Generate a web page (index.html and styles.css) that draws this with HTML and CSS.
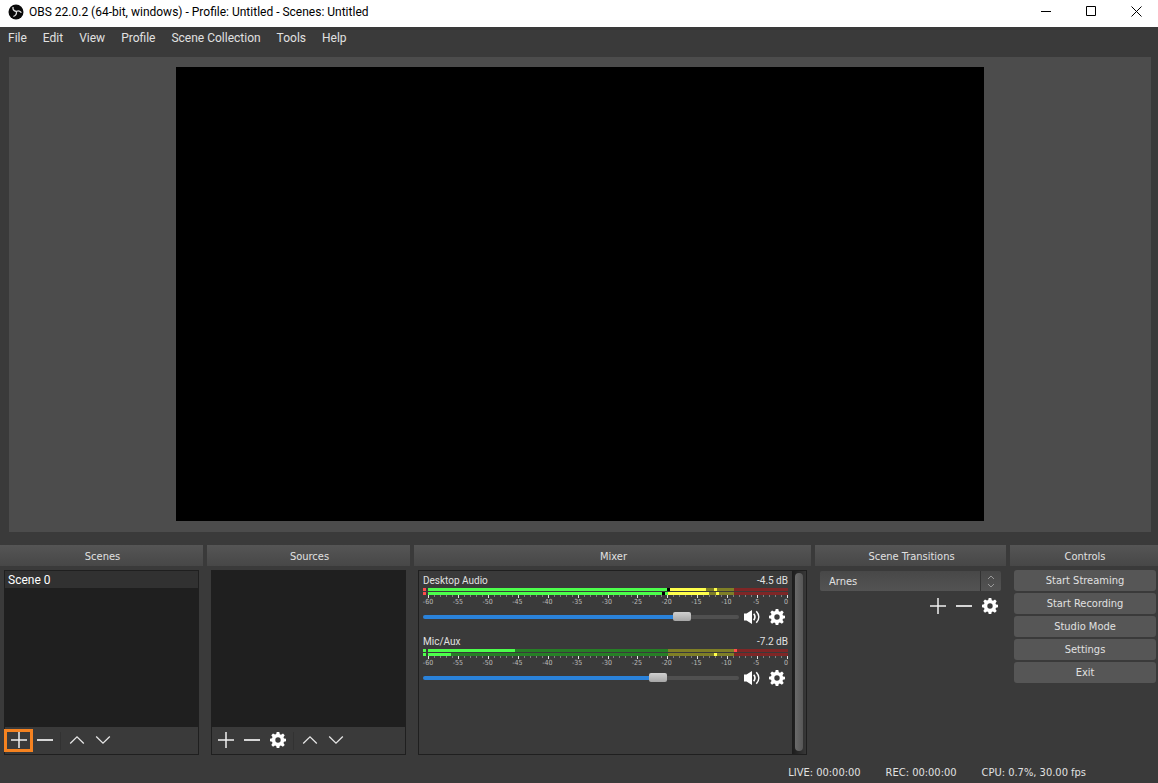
FILE: index.html
```html
<!DOCTYPE html>
<html lang="en">
<head>
<meta charset="utf-8">
<title>OBS 22.0.2</title>
<link rel="stylesheet" href="styles.css">
</head>
<body>
<svg class="defs" width="0" height="0" aria-hidden="true">
  <symbol id="plus" viewBox="0 0 16 16"><path d="M0 8h16M8 0v16" stroke="#f0f0f0" stroke-width="1.500" fill="none"/></symbol>
  <symbol id="minus" viewBox="0 0 16 16"><path d="M0 8h16" stroke="#d6d6d6" stroke-width="2" fill="none"/></symbol>
  <symbol id="up" viewBox="0 0 16 16"><path d="M1.200 11.500L8 4.800l6.800 6.700" stroke="#e6e6e6" stroke-width="1.300" fill="none"/></symbol>
  <symbol id="down" viewBox="0 0 16 16"><path d="M1.200 4.500L8 11.200l6.800-6.700" stroke="#e6e6e6" stroke-width="1.300" fill="none"/></symbol>
  <symbol id="gear" viewBox="0 0 16 16"><path fill="#fff" fill-rule="evenodd" d="M6.700 0h2.600l.5 2.200 1.200.5 2-1.200 1.700 1.700-1.200 2 .5 1.200 2 .4v2.500l-2 .5-.5 1.200 1.200 2-1.800 1.800-2-1.200-1.200.5L9.300 16H6.700l-.5-2-1.200-.5-2 1.200L1.300 13l1.200-2L2 9.800l-2-.5V6.800l2-.5.5-1.200-1.200-1.900L3 1.400l2 1.200 1.200-.5zM8 5.300a2.700 2.700 0 1 0 0 5.400 2.700 2.700 0 0 0 0-5.400z"/></symbol>
  <symbol id="speaker" viewBox="0 0 16 16"><path fill="#fff" d="M0 4.500h2.500L8 1v14l-5.500-3.500H0z"/><path d="M9.700 4.800c1.500 1.900 1.500 4.500 0 6.400M12.300 2.300c3.200 3.400 3.200 8 0 11.400" stroke="#fff" stroke-width="1.600" fill="none"/></symbol>
</svg>

<header class="titlebar">
  <svg class="logo" viewBox="0 0 16 16" aria-hidden="true">
    <circle cx="8" cy="8" r="7.500" fill="#0a0a0a"/>
    <path d="M5 3c-.3 2.300.8 4 3.300 4.500M13.300 8.800c-.9-1.900-3-2.400-5-1.300M8.300 7.500c.6 2.200-.4 4-2.900 5" stroke="#ddd" stroke-width="1.300" fill="none"/>
  </svg>
  <h1 class="window-title">OBS 22.0.2 (64-bit, windows) - Profile: Untitled - Scenes: Untitled</h1>
  <div class="window-buttons">
    <button class="window-button" aria-label="Minimize"><svg viewBox="0 0 11 11"><path d="M0 5.500h10" stroke="#000" fill="none"/></svg></button>
    <button class="window-button" aria-label="Maximize"><svg viewBox="0 0 11 11"><path d="M.5.500h9v9H.5z" stroke="#000" fill="none"/></svg></button>
    <button class="window-button" aria-label="Close"><svg viewBox="0 0 11 11"><path d="M.5.500l10 10M10.500.500l-10 10" stroke="#000" fill="none"/></svg></button>
  </div>
</header>

<nav class="menubar">
  <button class="menu">File</button><button class="menu">Edit</button><button class="menu">View</button><button class="menu">Profile</button><button class="menu">Scene Collection</button><button class="menu">Tools</button><button class="menu">Help</button>
</nav>

<main class="preview">
  <svg class="output" viewBox="0 0 808 454" role="img" aria-label="Preview"><path d="M0 0h808v454H0z"/></svg>
</main>

<div class="docks">
  <section class="dock">
    <h2 class="dock-title">Scenes</h2>
    <div class="panel">
      <ul class="list"><li class="list-item">Scene 0</li></ul>
      <div class="toolbar">
        <button class="tool tool-marked" aria-label="Add scene"><svg><use href="#plus"/></svg></button>
        <button class="tool" aria-label="Remove scene"><svg><use href="#minus"/></svg></button>
        <span class="separator"></span>
        <button class="tool" aria-label="Move scene up"><svg><use href="#up"/></svg></button>
        <button class="tool" aria-label="Move scene down"><svg><use href="#down"/></svg></button>
      </div>
    </div>
  </section>

  <section class="dock">
    <h2 class="dock-title">Sources</h2>
    <div class="panel">
      <ul class="list"></ul>
      <div class="toolbar">
        <button class="tool" aria-label="Add source"><svg><use href="#plus"/></svg></button>
        <button class="tool" aria-label="Remove source"><svg><use href="#minus"/></svg></button>
        <button class="tool" aria-label="Source properties"><svg><use href="#gear"/></svg></button>
        <span class="separator"></span>
        <button class="tool" aria-label="Move source up"><svg><use href="#up"/></svg></button>
        <button class="tool" aria-label="Move source down"><svg><use href="#down"/></svg></button>
      </div>
    </div>
  </section>

  <section class="dock">
    <h2 class="dock-title">Mixer</h2>
    <div class="panel mixer">
      <div class="strips">
        <div class="strip">
          <div class="strip-head"><label for="desktop">Desktop Audio</label><span>-4.5 dB</span></div>
          <svg class="meter" viewBox="0 0 365 10" preserveAspectRatio="none" shape-rendering="crispEdges" aria-hidden="true">
            <path fill="#ff4c4c" d="M0 0h3v3H0zM0 4h3v3H0z"/>
            <path fill="#4cff4c" d="M5 0h239v3H5zM5 4h234v3H5zM242 4h3v3h-3z"/>
            <path fill="#000" d="M244 0h3v3h-3zM239 4h3v3h-3z"/>
            <path fill="#7f7f26" d="M283 0h28v3h-28zM286 4h25v3h-25z"/>
            <path fill="#ffff4c" d="M247 0h36v3h-36zM245 4h41v3h-41zM291 0h3v3h-3zM293 4h3v3h-3z"/>
            <path fill="#7f2626" d="M311 0h54v3h-54zM311 4h54v3h-54z"/>
            <g class="ticks"></g>
          </svg>
          <div class="scale"></div>
          <div class="strip-controls">
            <input class="volume" id="desktop" type="range" min="0" max="1000" value="839" style="--fill:82%">
            <button class="tool" aria-label="Mute Desktop Audio"><svg><use href="#speaker"/></svg></button>
            <button class="tool" aria-label="Desktop Audio settings"><svg><use href="#gear"/></svg></button>
          </div>
        </div>
        <div class="strip">
          <div class="strip-head"><label for="mic">Mic/Aux</label><span>-7.2 dB</span></div>
          <svg class="meter" viewBox="0 0 365 10" preserveAspectRatio="none" shape-rendering="crispEdges" aria-hidden="true">
            <path fill="#267f26" d="M5 0h240v3H5zM5 4h240v3H5z"/>
            <path fill="#4cff4c" d="M0 0h3v3H0zM0 4h3v3H0zM5 0h87v3H5zM5 4h23v3H5z"/>
            <path fill="#7f7f26" d="M245 0h66v3h-66zM245 4h66v3h-66z"/>
            <path fill="#7f2626" d="M311 0h54v3h-54zM311 4h54v3h-54z"/>
            <path fill="#ff4c4c" d="M311 0h3v3h-3z"/>
            <path fill="#ffff4c" d="M291 4h3v3h-3z"/>
            <g class="ticks"></g>
          </svg>
          <div class="scale"></div>
          <div class="strip-controls">
            <input class="volume" id="mic" type="range" min="0" max="1000" value="758" style="--fill:74%">
            <button class="tool" aria-label="Mute Mic/Aux"><svg><use href="#speaker"/></svg></button>
            <button class="tool" aria-label="Mic/Aux settings"><svg><use href="#gear"/></svg></button>
          </div>
        </div>
      </div>
      <div class="scrollbar"><div class="scrollbar-handle"></div></div>
    </div>
  </section>

  <section class="dock">
    <h2 class="dock-title">Scene Transitions</h2>
    <div class="transitions">
      <div class="combo">
        <select class="combo-select" aria-label="Scene transition"><option>Arnes</option></select>
        <svg class="combo-arrows" viewBox="0 0 20 20" aria-hidden="true"><path d="M7 8l3-3 3 3M7 13l3 3 3-3" stroke="#999" fill="none"/></svg>
      </div>
      <div class="transition-tools">
        <button class="tool" aria-label="Add transition"><svg><use href="#plus"/></svg></button>
        <button class="tool" aria-label="Remove transition"><svg><use href="#minus"/></svg></button>
        <button class="tool" aria-label="Transition properties"><svg><use href="#gear"/></svg></button>
      </div>
    </div>
  </section>

  <section class="dock">
    <h2 class="dock-title">Controls</h2>
    <div class="controls">
      <button class="control">Start Streaming</button>
      <button class="control">Start Recording</button>
      <button class="control">Studio Mode</button>
      <button class="control">Settings</button>
      <button class="control">Exit</button>
    </div>
  </section>
</div>

<footer class="statusbar">
  <span>LIVE: 00:00:00</span><span>REC: 00:00:00</span><span>CPU: 0.7%, 30.00 fps</span>
</footer>
<script src="meters.js"></script>
</body>
</html>
```
FILE: meters.js
```js
// Draws one tick per decibel and a label every five, from -60 to 0.
const SPAN = 359;
document.querySelectorAll(".ticks").forEach((group) => {
  for (let db = 0; db <= 60; db++) {
    const major = db % 5 === 0;
    const rect = document.createElementNS("http://www.w3.org/2000/svg", "rect");
    rect.setAttribute("x", Math.round(5 + (db * SPAN) / 60));
    rect.setAttribute("y", 7);
    rect.setAttribute("width", 1);
    rect.setAttribute("height", major ? 3 : 2);
    rect.setAttribute("fill", major ? "#e6e6e6" : "#7f7f7f");
    group.append(rect);
  }
});
document.querySelectorAll(".scale").forEach((scale) => {
  for (let db = -60; db <= 0; db += 5) {
    const label = document.createElement("span");
    label.textContent = db;
    scale.append(label);
  }
});
```
FILE: styles.css
```css
* { box-sizing: border-box; }

body {
  margin: 0;
  height: 100vh;
  display: flex;
  flex-direction: column;
  background: #3a3a3a;
  color: #e1e1e1;
  font: 11px/16px "DejaVu Sans Condensed", "DejaVu Sans", sans-serif;
}

button, select, input { margin: 0; font: inherit; color: inherit; }
button { border: 0; padding: 0; background: none; }
h1, h2, ul { margin: 0; padding: 0; font: inherit; }
.defs { position: absolute; }

.titlebar {
  display: flex;
  flex: none;
  align-items: center;
  height: 27px;
  padding: 0 0 4px 8px;
  background: #fff;
  color: #000;
  font: 12px/16px Roboto, sans-serif;
}
.logo { width: 16px; height: 16px; margin-right: 5px; }
.window-title { flex: 1; }
.window-buttons { display: flex; }
.window-button { display: flex; width: 45px; padding-left: 18px; }
.window-button svg { width: 11px; height: 11px; }

.menubar {
  display: flex;
  flex: none;
  height: 30px;
  padding-bottom: 8px;
  font: 12px/16px Roboto, sans-serif;
}
.menu { padding: 0 8px; }

.preview {
  flex: 1 1 0;
  min-height: 120px;
  margin: 0 7px 13px 9px;
  padding: 10px 0 11px;
  background: #4c4c4c;
}
.output { display: block; width: 100%; height: 100%; fill: #000; }

.docks {
  display: grid;
  flex: none;
  grid-template-columns: 203fr 203fr 397fr 191fr 148fr;
  gap: 4px;
  height: 210px;
}
.dock { display: flex; flex-direction: column; min-width: 0; }
.dock-title {
  height: 21px;
  padding: 2px 0 0 2px;
  line-height: 20px;
  text-align: center;
  background: linear-gradient(#555, #474747);
}
.panel {
  flex: 1;
  display: flex;
  flex-direction: column;
  margin: 4px 4px 0;
  border: 1px solid #1f1f1f;
}
.list { flex: 1; background: #1f1f1f; list-style: none; }
.list-item {
  padding: 1px 3px 0;
  background: #313131;
  color: #fff;
  font: 12px/16px Roboto, sans-serif;
}
.toolbar { display: flex; height: 27px; padding-left: 1px; }
.tool {
  position: relative;
  display: flex;
  align-items: center;
  justify-content: center;
  width: 26px;
  height: 26px;
}
.tool svg { width: 16px; height: 16px; }
.tool-marked::after {
  content: "";
  position: absolute;
  inset: 2px -1px 1px -2px;
  border: 3px solid #f58220;
}
.separator { width: 1px; height: 18px; margin: 5px 3px 0 2px; background: #323232; }

.mixer { flex-direction: row; }
.strips { flex: 1; min-width: 0; padding: 3px 4px 0; }
.strip { margin-bottom: 7px; }
.strip-head {
  display: flex;
  justify-content: space-between;
  font: 10px/14px Roboto, sans-serif;
}
.meter { display: block; width: 100%; height: 10px; }
.scale {
  display: flex;
  justify-content: space-between;
  height: 8px;
  margin-right: -3px;
  font-size: 7px;
  line-height: 8px;
  color: #bbb;
}
.scale span { display: flex; justify-content: center; width: 10px; }
.strip-controls { display: flex; align-items: center; height: 22px; margin-right: -1px; }
.strip-controls .tool { width: 25px; height: 22px; }
.volume {
  flex: 1;
  min-width: 0;
  height: 16px;
  appearance: none;
  background: none;
}
.volume::-webkit-slider-runnable-track {
  height: 4px;
  border-radius: 2px;
  background: linear-gradient(90deg, #2a82da var(--fill), #505050 var(--fill));
}
.volume::-webkit-slider-thumb {
  appearance: none;
  width: 18px;
  height: 9px;
  margin-top: -3px;
  border-radius: 2px;
  background: linear-gradient(#d0d0d0, #a6a6a6);
}
.scrollbar { width: 14px; padding: 2px 3px; background: linear-gradient(90deg, #1c1c1c, #383838); }
.scrollbar-handle {
  width: 8px;
  height: 178px;
  border-radius: 4px;
  background: linear-gradient(90deg, #6a6a6a, #575757);
}

.transitions { padding: 5px 3px 0 5px; }
.combo { position: relative; height: 20px; margin-right: 2px; }
.combo-select {
  width: 100%;
  height: 20px;
  padding: 2px 9px 0;
  border: 0;
  border-radius: 2px;
  appearance: none;
  background: linear-gradient(#484848, #535353);
}
.combo-arrows {
  position: absolute;
  top: 0;
  right: 0;
  width: 21px;
  height: 20px;
  border-left: 1px solid #333;
}
.transition-tools { display: flex; justify-content: flex-end; padding-top: 2px; }

.controls { display: grid; gap: 2px; padding: 4px 2px 0 4px; }
.control { height: 21px; padding-top: 1px; border-radius: 3px; background: #565656; }

.statusbar {
  display: flex;
  flex: none;
  justify-content: flex-end;
  gap: 25px;
  height: 28px;
  padding: 10px 72px 0 0;
}
```
